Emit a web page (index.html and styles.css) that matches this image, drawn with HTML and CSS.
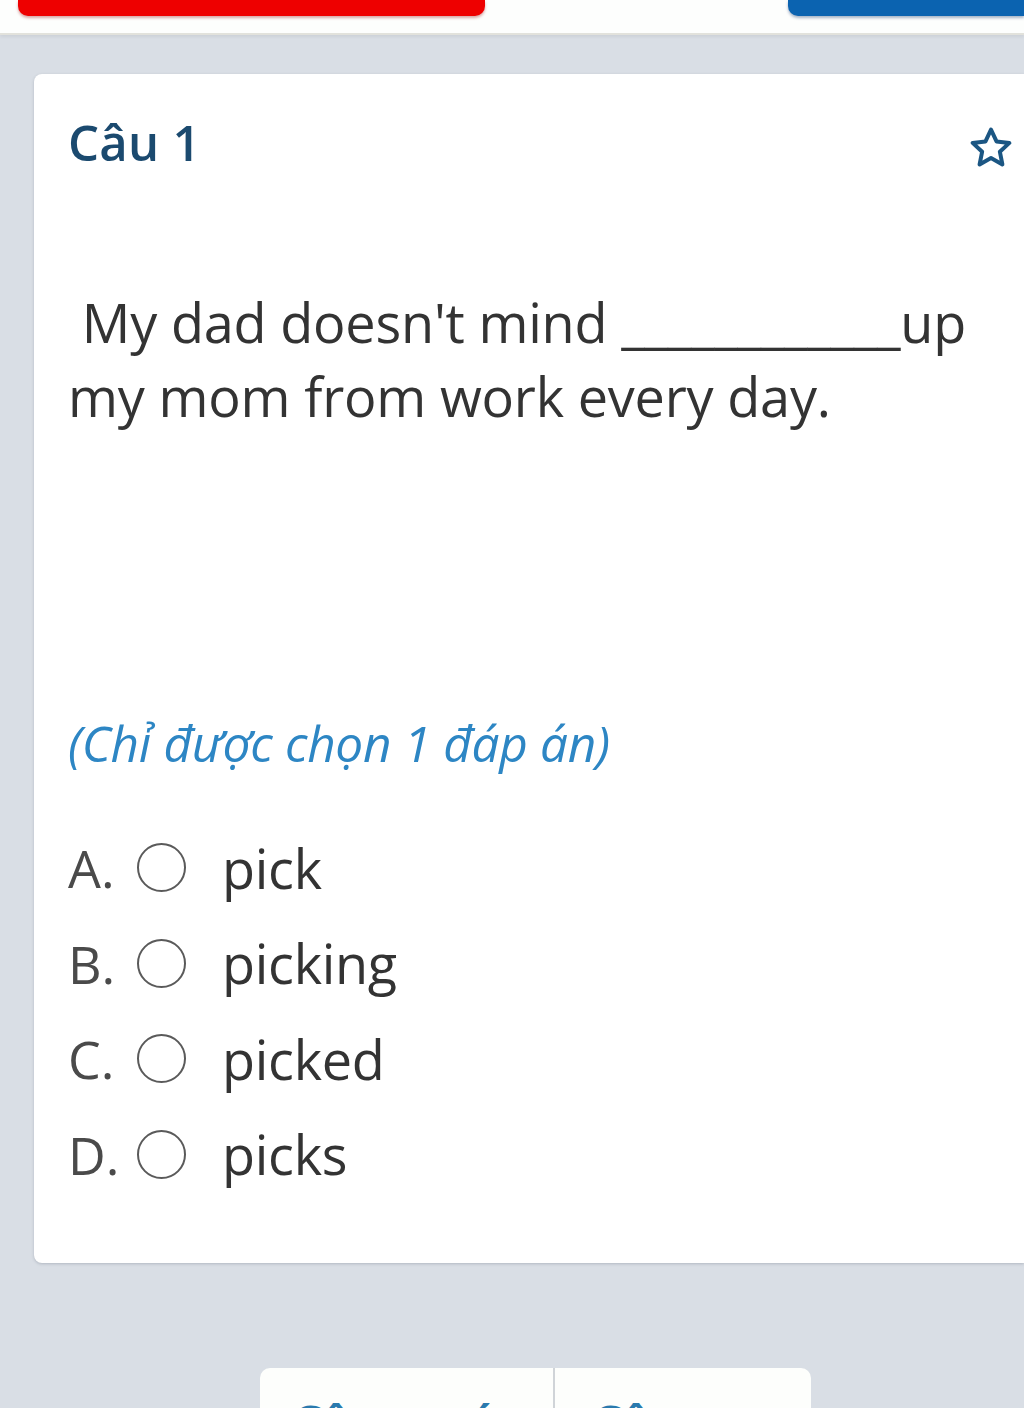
FILE: index.html
```html
<!DOCTYPE html>
<html lang="vi">
<head>
<meta charset="utf-8">
<link rel="stylesheet" href="styles.css">
</head>
<body>
<header class="topbar">
  <div class="btn-red"></div>
  <div class="btn-blue"></div>
</header>
<main class="page">
  <section class="card">
    <div class="card-head">
      <h1 class="q-title">Câu 1</h1>
      <svg class="star" viewBox="0 0 24 24" width="48" height="48" aria-hidden="true">
        <path d="M12 2.8l2.75 5.9 6.45.75-4.78 4.4 1.28 6.37L12 17.05l-5.7 3.17 1.28-6.37L2.8 9.45l6.45-.75z" fill="none" stroke="#1b5683" stroke-width="2" stroke-linejoin="round"/>
      </svg>
    </div>
    <p class="q-text">&nbsp;My dad doesn't mind <span class="blank">____________</span>up my mom from work every day.</p>
    <p class="hint">(Chỉ được chọn 1 đáp án)</p>
    <ul class="options">
      <li class="option"><span class="label">A.</span><span class="radio"></span><span class="answer">pick</span></li>
      <li class="option"><span class="label">B.</span><span class="radio"></span><span class="answer">picking</span></li>
      <li class="option"><span class="label">C.</span><span class="radio"></span><span class="answer">picked</span></li>
      <li class="option"><span class="label">D.</span><span class="radio"></span><span class="answer">picks</span></li>
    </ul>
  </section>
  <nav class="pager">
    <button class="pager-btn">Câu trước</button>
    <button class="pager-btn">Câu sau</button>
  </nav>
</main>
</body>
</html>
```
FILE: styles.css
```css
* { box-sizing: border-box; }
html, body {
  margin: 0;
  padding: 0;
  height: 1408px;
  overflow: hidden;
}
body {
  background: #d9dee5;
  font-family: "Open Sans", "Noto Sans", sans-serif;
}
.topbar {
  height: 35px;
  background: #fdfefd;
  border-bottom: 2px solid #e2e2dc;
  display: flex;
  justify-content: space-between;
  padding: 0 0 0 18px;
  box-shadow: 0 2px 3px rgba(0,0,0,0.06);
}
.btn-red {
  width: 467px;
  height: 16px;
  background: #ee0000;
  border-radius: 0 0 10px 10px;
  box-shadow: 0 2px 3px rgba(150,0,0,0.35);
}
.btn-blue {
  width: 236px;
  height: 16px;
  background: #0b63b0;
  border-radius: 0 0 0 10px;
  box-shadow: 0 2px 3px rgba(0,40,100,0.35);
}
.page {
  padding: 39px 0 0 34px;
}
.card {
  background: #fff;
  border-radius: 8px 0 0 8px;
  box-shadow: 0 1px 3px rgba(60,70,90,0.25);
  height: 1189px;
  padding: 0 12px 0 34px;
  display: flex;
  flex-direction: column;
}
.card-head {
  display: flex;
  justify-content: space-between;
  align-items: center;
  height: 136px;
}
.q-title {
  margin: 0;
  font-size: 49px;
  font-weight: 600;
  color: #1b4a6f;
  letter-spacing: 0.3px;
}
.star { margin-top: 12px; margin-right: -3px; }
.q-text {
  margin: 75px 0 0;
  font-size: 54px;
  line-height: 74px;
  color: #333;
  letter-spacing: -0.2px;
}
.blank { letter-spacing: -0.4px; }
.hint {
  margin: 280px 0 0;
  font-size: 49.5px;
  font-style: italic;
  color: #2d86c4;
  letter-spacing: -0.3px;
  line-height: 60px;
}
.options {
  list-style: none;
  margin: 47px 0 0;
  padding: 0;
  display: flex;
  flex-direction: column;
}
.option {
  display: flex;
  align-items: center;
  height: 95.5px;
  font-size: 54px;
  color: #333;
}
.label {
  width: 69px;
  color: #4a4a4a;
  font-size: 52px;
  font-weight: 500;
}
.radio {
  width: 49px;
  height: 49px;
  border: 2px solid #5a5a5a;
  border-radius: 50%;
  margin-right: 36px;
  flex: none;
}
.answer { letter-spacing: -0.3px; }
.pager {
  display: flex;
  margin: 105px 0 0 226px;
  width: 551px;
}
.pager-btn {
  flex: 1;
  height: 80px;
  background: #fdfefc;
  border: none;
  font-family: inherit;
  font-size: 48px;
  font-weight: 600;
  color: #2a7aae;
  padding: 22px 0 0;
  text-align: center;
  align-self: flex-start;
}
.pager-btn:first-child {
  flex: 0 0 295px;
  border-radius: 10px 0 0 0;
  border-right: 2px solid #d0d4d8;
}
.pager-btn:last-child {
  border-radius: 0 10px 0 0;
}
```
